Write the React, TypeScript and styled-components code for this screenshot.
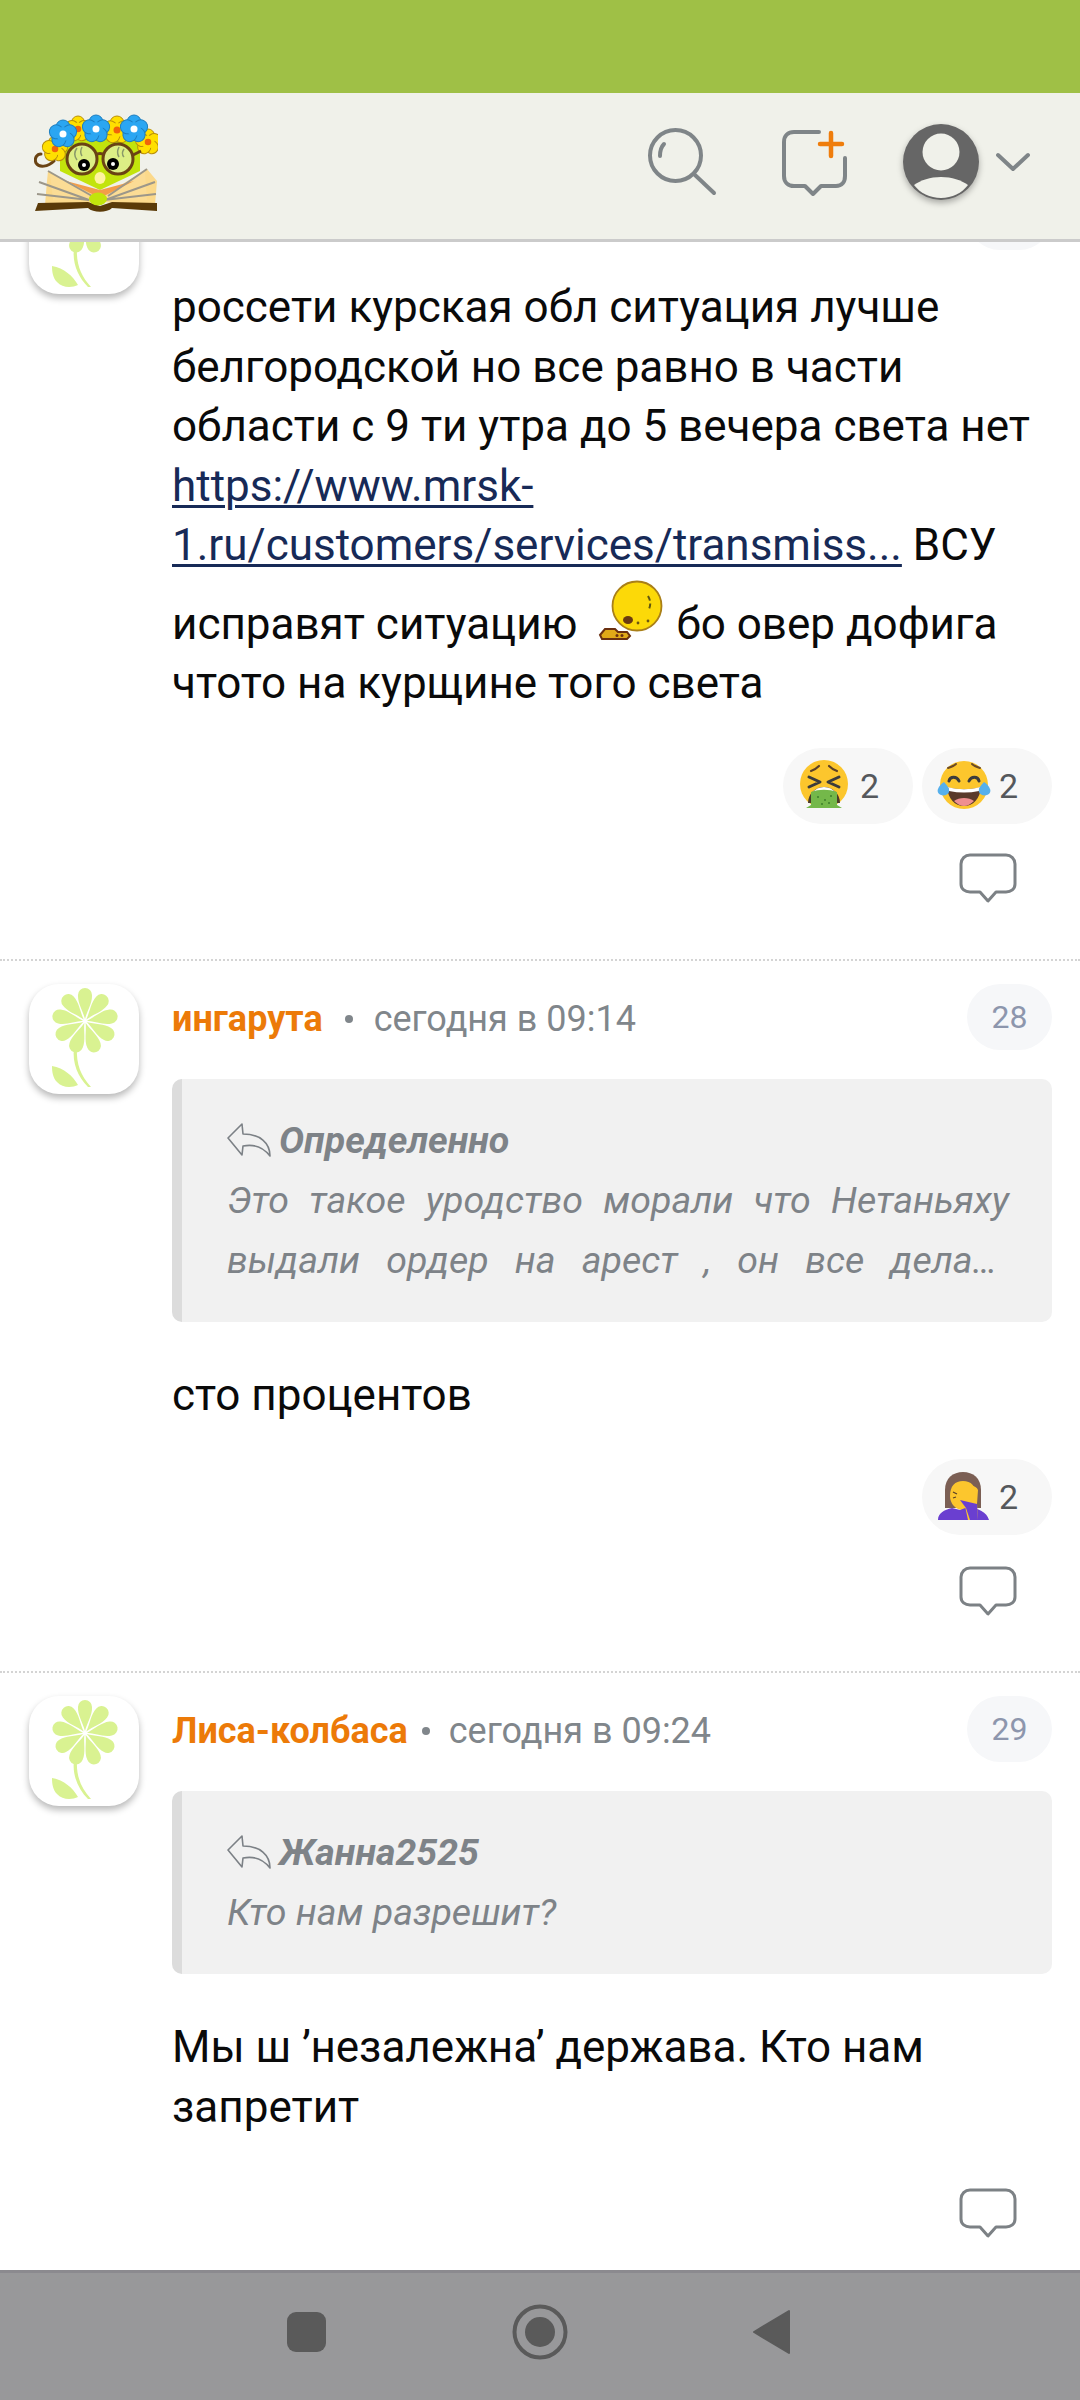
import React from "react";
import styled, { createGlobalStyle } from "styled-components";

const GlobalStyle = createGlobalStyle`
  html, body {
    margin: 0;
    padding: 0;
    background: #fff;
    font-family: Roboto, "Liberation Sans", sans-serif;
  }
  * { box-sizing: border-box; }
`;

const Screen = styled.div`
  width: 1080px;
  height: 2400px;
  display: flex;
  flex-direction: column;
  overflow: hidden;
  background: #fff;
`;

const StatusBar = styled.div`
  height: 93px;
  flex: none;
  background: #9fc046;
`;

const Header = styled.header`
  height: 149px;
  flex: none;
  display: flex;
  align-items: center;
  padding: 0 50px 6px 34px;
  background: #f0f1ea;
  border-bottom: 3px solid #cbcbcb;
  position: relative;
  z-index: 2;
`;

const HeaderIcons = styled.div`
  margin-left: auto;
  display: flex;
  align-items: center;
`;

const SearchButton = styled.div`
  display: flex;
  margin-right: 64px;
`;

const ComposeButton = styled.div`
  display: flex;
  margin-right: 52px;
`;

const UserButton = styled.div`
  display: flex;
  align-items: center;
  gap: 14px;
`;

const Feed = styled.main`
  flex: 1;
  overflow: hidden;
  min-height: 0;
`;

const FeedList = styled.div`
  margin-top: -81px;
`;

const CommentRow = styled.article<{ $last?: boolean }>`
  display: grid;
  grid-template-columns: 110px 1fr;
  column-gap: 33px;
  padding: 23px 28px 0 29px;
  border-bottom: ${(p) => (p.$last ? "none" : "2px dotted #d4d4d4")};
`;

const Avatar = styled.div`
  width: 110px;
  height: 110px;
  border-radius: 30px;
  background: #fff;
  box-shadow: 0 4px 7px rgba(0, 0, 0, 0.28);
  display: flex;
  align-items: center;
  justify-content: center;
`;

const CommentBody = styled.div`
  min-width: 0;
  display: flex;
  flex-direction: column;
`;

const MetaRow = styled.div`
  height: 66px;
  padding-top: 4px;
  display: flex;
  align-items: center;
  font-size: 36px;
  color: #80868b;
  white-space: nowrap;
`;

const Author = styled.span`
  font-weight: 700;
  color: #ec7a08;
`;

const Dot = styled.span<{ $left: number; $right: number }>`
  width: 8px;
  height: 8px;
  border-radius: 50%;
  background: #80868b;
  margin: 0 ${(p) => p.$right}px 0 ${(p) => p.$left}px;
`;

const NumberPill = styled.div`
  margin: -4px 0 0 auto;
  width: 85px;
  height: 66px;
  border-radius: 33px;
  background: #f6f7f9;
  color: #8d96ad;
  font-size: 32px;
  display: flex;
  align-items: center;
  justify-content: center;
`;

const Quote = styled.blockquote`
  margin: 29px 0 0;
  padding: 31px 43px 32px 45px;
  background: #f1f1f1;
  border-left: 10px solid #dcdcdc;
  border-radius: 10px;
  color: #7e8388;
  font-size: 37.5px;
  font-style: italic;
  line-height: 60px;
`;

const QuoteTitle = styled.div`
  display: flex;
  align-items: center;
  gap: 8px;
  font-weight: 700;
`;

const QuoteLine = styled.div<{ $justify?: boolean; $inset?: number }>`
  white-space: nowrap;
  text-align: left;
  margin-right: ${(p) => p.$inset ?? 0}px;
  ${(p) => p.$justify && "text-align-last: justify; white-space: normal;"}
`;

const Text = styled.p<{ $top?: number }>`
  margin: ${(p) => p.$top ?? 44}px 0 0;
  font-size: 44px;
  line-height: 59.5px;
  color: #0a0a0a;
`;

const PostLink = styled.a`
  color: #172a57;
  text-decoration: underline;
  text-decoration-thickness: 3px;
  text-underline-offset: 4px;
`;

const InlineEmoji = styled.span`
  display: inline-block;
  overflow: hidden;
  width: 70px;
  height: 72px;
  margin: 0 10px 0 8px;
  vertical-align: -9px;
`;

const Reactions = styled.div`
  margin-top: 34px;
  display: flex;
  justify-content: flex-end;
  gap: 9px;
`;

const ReactionPill = styled.div`
  width: 130px;
  height: 76px;
  border-radius: 38px;
  background: #f7f7f7;
  padding-left: 15px;
  display: flex;
  align-items: center;
  gap: 8px;
  color: #55585c;
  font-size: 34px;
`;

const ReplyRow = styled.div<{ $top: number; $bottom: number }>`
  margin-top: ${(p) => p.$top}px;
  padding: 0 35px ${(p) => p.$bottom}px 0;
  display: flex;
  justify-content: flex-end;
`;

const NavBar = styled.nav`
  height: 130px;
  flex: none;
  background: #98989a;
  border-top: 3px solid #8b8a8f;
  display: grid;
  grid-template-columns: repeat(3, 232px);
  justify-content: center;
  justify-items: center;
  align-items: center;
  padding-bottom: 10px;
`;

const Square = styled.div`
  width: 39px;
  height: 40px;
  margin-right: 3px;
  border-radius: 9px;
  background: #5a5a5a;
`;

const WreathFlower = ({ x, y, color, edge, core, size }: { x: number; y: number; color: string; edge: string; core: string; size: number }) => (
  <g fill={color} stroke={edge} strokeWidth="1">
    {[0, 72, 144, 216, 288].map((a) => (
      <circle key={a} cx={x} cy={y - size} r={size} transform={`rotate(${a} ${x} ${y})`} />
    ))}
    <circle cx={x} cy={y} r={size} stroke="none" />
    <circle cx={x} cy={y} r={size * 0.5} fill={core} stroke="none" />
  </g>
);

const Logo = () => (
  <svg width="124" height="98" viewBox="0 0 124 98">
    <path d="M20 47c-6 6-15 7-18 2-2-5 1-9 5-9" fill="none" stroke="#6a4314" strokeWidth="3" strokeLinecap="round" />
    <path d="M26 24h80v33L66 76 26 57z" fill="#c2e40c" />
    <path d="M14 57l52 27 47-29 10 12-2 24-55-3-55 3 2-24z" fill="#fbd98b" />
    <path d="M16 60l50 24-47 2zM111 58L66 84l47 2z" fill="#fbdc95" />
    <path d="M32 67l34 17 34-17-34 9z" fill="#f29d4a" />
    <path d="M14 57l44 25M5 68l50 18M3 80l52 6M113 55L74 82M121 68l-50 18M122 80l-52 6" stroke="#9c978a" strokeWidth="2" fill="none" />
    <path d="M1 97l3-8 50-1 12 4 12-4 45 1v8l-45-3c-5 5-19 5-24 0z" fill="#5a3a08" />
    <ellipse cx="64" cy="85" rx="9" ry="6.5" fill="#c2e40c" />
    <ellipse cx="66" cy="64" rx="5.5" ry="6" fill="#fff3a0" />
    <WreathFlower x={21} y={35} size={6.5} color="#ffdf00" edge="#b98f0a" core="#f0640a" />
    <WreathFlower x={44} y={15} size={6.5} color="#ffdf00" edge="#b98f0a" core="#f0640a" />
    <WreathFlower x={83} y={16} size={7} color="#ffdf00" edge="#b98f0a" core="#f0640a" />
    <WreathFlower x={114} y={28} size={6.5} color="#ffdf00" edge="#b98f0a" core="#f0640a" />
    <WreathFlower x={29} y={20} size={7} color="#2ba6f2" edge="#1d7ec0" core="#fff" />
    <WreathFlower x={62} y={15} size={7} color="#2ba6f2" edge="#1d7ec0" core="#fff" />
    <WreathFlower x={100} y={15} size={7} color="#2ba6f2" edge="#1d7ec0" core="#fff" />
    <circle cx="48" cy="45" r="15" fill="#dcee85" stroke="#6a4314" strokeWidth="3" />
    <circle cx="84" cy="45" r="15" fill="#dcee85" stroke="#6a4314" strokeWidth="3" />
    <path d="M62 41c2-2 6-2 8 0M99 41l8-4" fill="none" stroke="#6a4314" strokeWidth="3" />
    <path d="M43 34c-3 4-3 8 0 12M48 33c-2 4-2 6 0 9M85 33c-2 4-2 7 0 10M90 35c-2 3-2 6 0 8" fill="none" stroke="#8a9a6a" strokeWidth="1.5" />
    <circle cx="50" cy="51" r="6" fill="#000" />
    <circle cx="50" cy="51" r="2" fill="#fff" />
    <circle cx="79" cy="50" r="6" fill="#000" />
    <circle cx="79" cy="50" r="2" fill="#fff" />
  </svg>
);

const SearchIcon = () => (
  <svg width="70" height="70" viewBox="0 0 70 70" fill="none" stroke="#7f8588" strokeWidth="4" strokeLinecap="round">
    <circle cx="27.5" cy="27.5" r="25.5" />
    <path d="M47 47l19 18" />
    <path d="M12 28c0-5 1-9 4-12" />
  </svg>
);

const ComposeIcon = () => (
  <svg width="66" height="66" viewBox="0 0 66 66" fill="none" strokeLinecap="round" strokeLinejoin="round">
    <path d="M37 2H12C6 2 2 6 2 12v34c0 6 4 10 10 10h11l8 8 8-8h15c6 0 9-4 9-10V28" stroke="#7f8588" strokeWidth="4" />
    <path d="M38 14h22M49 3v23" stroke="#ef7d0c" strokeWidth="4.5" />
  </svg>
);

const UserIcon = () => (
  <svg width="82" height="82" viewBox="0 0 82 82" style={{ filter: "drop-shadow(0 3px 3px rgba(0,0,0,.3))" }}>
    <circle cx="41" cy="40" r="38" fill="#666" />
    <circle cx="41" cy="30" r="18.5" fill="#f0f1ea" />
    <path d="M14 63c7-5 16-8 27-8s20 3 27 8c-6 8-16 13-27 13S20 71 14 63z" fill="#f0f1ea" />
  </svg>
);

const Chevron = () => (
  <svg width="34" height="22" viewBox="0 0 34 22" fill="none" stroke="#7f8588" strokeWidth="4" strokeLinecap="round" strokeLinejoin="round">
    <path d="M2 3l15 14L32 3" />
  </svg>
);

const Flower = () => (
  <svg width="110" height="110" viewBox="0 0 110 110">
    <g fill="#d9f291">
      {[0, 40, 80, 120, 160, 200, 240, 280, 320].map((a) => (
        <path key={a} transform={`rotate(${a} 56 37)`} d="M56 35C54 27 48.5 19 49 11a7 7 0 0 1 14 0c.5 8-5 16-7 24z" />
      ))}
    </g>
    <path d="M23 82c12 2 21 10 26 19-6 3-16 3-21-3-4-4-5-10-5-16z" fill="#d9f291" />
    <path d="M45 64c-2 15 4 29 14 39h3C52 92 47 80 48 64z" fill="#d9f291" />
  </svg>
);

const ReplyArrow = () => (
  <svg width="44" height="34" viewBox="0 0 44 34" fill="none" stroke="#7c8186" strokeWidth="1.6" strokeLinejoin="round">
    <path d="M15 1L1 15l14 17 1-9c10-2 20 1 27 10 0-13-10-22-27-22l-1-10z" />
  </svg>
);

const ReplyBubble = () => (
  <svg width="58" height="50" viewBox="0 0 58 50" fill="none" stroke="#7c8185" strokeWidth="3" strokeLinejoin="round">
    <path d="M11 2h36c5 0 9 4 9 9v20c0 5-4 8-9 8H37l-8 9-8-9H11c-5 0-9-3-9-8V11c0-5 4-9 9-9z" />
  </svg>
);

const VomitEmoji = () => (
  <svg width="54" height="54" viewBox="0 0 54 54">
    <circle cx="26" cy="25" r="24" fill="#fcc62d" />
    <path d="M13 12c3-1 6-3 8-5M39 12c-3-1-6-3-8-5" stroke="#5a4026" strokeWidth="2.2" fill="none" strokeLinecap="round" />
    <path d="M11 18l11 5-11 5M41 18l-11 5 11 5" stroke="#3c3c3c" strokeWidth="3" fill="none" strokeLinecap="round" strokeLinejoin="round" />
    <path d="M10 44c0-9 7-16 16-16s16 7 16 16z" fill="#4a3a2a" />
    <path d="M14 34c3-4 7-6 12-6s9 2 12 6z" fill="#fff" />
    <path d="M13 33c8-3 18-3 26 0v13l5 3H8l5-3z" fill="#74b84a" />
    <g fill="#3d7f2a">
      <circle cx="20" cy="38" r="1" />
      <circle cx="27" cy="41" r="1" />
      <circle cx="33" cy="37" r="1" />
      <circle cx="24" cy="45" r="1" />
      <circle cx="31" cy="44" r="1" />
    </g>
  </svg>
);

const JoyEmoji = () => (
  <svg width="54" height="54" viewBox="0 0 54 54">
    <circle cx="27" cy="26" r="24" fill="#fcc62d" />
    <path d="M12 22c1-5 8-5 10 0M32 22c2-5 9-5 10 0" stroke="#3c3c3c" strokeWidth="3" fill="none" strokeLinecap="round" />
    <path d="M11 9c3-1 6-2 8-4M43 9c-3-1-6-2-8-4" stroke="#6b4a26" strokeWidth="2" fill="none" strokeLinecap="round" />
    <path d="M10 28c11 3 23 3 34 0-1 12-8 19-17 19S11 40 10 28z" fill="#5a3a2a" />
    <path d="M11 28c10 3 22 3 32 0l-1 4c-10 2-20 2-30 0z" fill="#fff" />
    <path d="M17 42c5-4 15-4 20 0-3 3-7 5-10 5s-7-2-10-5z" fill="#ef8f8f" />
    <path d="M7 23c3 3 6 7 5 10-1 3-5 4-8 3-3-1-4-4-3-6 1-3 3-5 6-7zM47 23c-3 3-6 7-5 10 1 3 5 4 8 3 3-1 4-4 3-6-1-3-3-5-6-7z" fill="#56b0ec" />
  </svg>
);

const FacepalmEmoji = () => (
  <svg width="54" height="54" viewBox="0 0 54 54">
    <path d="M8 38V20C8 8 16 2 26 2s18 6 18 18v18z" fill="#7b5f54" />
    <path d="M13 26c0-10 5-15 13-15 8 0 13 5 13 15 0 8-6 14-13 14s-13-6-13-14z" fill="#fcc62d" />
    <path d="M1 50c0-7 6-10 14-12l8 2 8-3c10 1 19 5 21 13z" fill="#6a3fd0" />
    <path d="M22 20l10-4c4-1 8 1 9 4l-1 14 1 16H31l-3-14-5-6-6-1 2-5z" fill="#fcc62d" />
    <path d="M23 30l6 8 4 12h8l-1-16" fill="#6a3fd0" />
    <path d="M16 22l4 2M16 28l3-1" stroke="#5a4026" strokeWidth="1.3" />
  </svg>
);

const SickEmoji = () => (
  <svg width="70" height="72" viewBox="0 0 70 72">
    <circle cx="41" cy="30" r="24.5" fill="#fcd908" stroke="#a97f18" strokeWidth="1.8" />
    <path d="M52 20c3 5 3 10 0 15" fill="none" stroke="#5f5510" strokeWidth="2" strokeDasharray="5 3" />
    <ellipse cx="32" cy="44" rx="5" ry="4" fill="#6a3a10" />
    <circle cx="42" cy="47" r="1.4" fill="#6a5510" />
    <circle cx="52" cy="45" r="1.4" fill="#6a5510" />
    <path d="M4 59l5-6h10l3 3h9l3 4-3 3H6z" fill="#e0a818" stroke="#6a2f10" strokeWidth="2" />
    <circle cx="21" cy="59.5" r="1.5" fill="#6a2f10" />
    <circle cx="26" cy="59.5" r="1.5" fill="#6a2f10" />
  </svg>
);

export default function App() {
  return (
    <Screen>
      <GlobalStyle />
      <StatusBar />
      <Header>
        <Logo />
        <HeaderIcons>
          <SearchButton><SearchIcon /></SearchButton>
          <ComposeButton><ComposeIcon /></ComposeButton>
          <UserButton>
            <UserIcon />
            <Chevron />
          </UserButton>
        </HeaderIcons>
      </Header>
      <Feed>
        <FeedList>
          <CommentRow>
            <Avatar><Flower /></Avatar>
            <CommentBody>
              <MetaRow>
                <NumberPill>27</NumberPill>
              </MetaRow>
              <Text $top={28}>
                россети курская обл ситуация лучше белгородской но все равно в части области с 9 ти утра до 5 вечера света нет{" "}
                <PostLink>https://www.mrsk-1.ru/customers/services/transmiss...</PostLink> ВСУ исправят ситуацию{" "}
                <InlineEmoji><SickEmoji /></InlineEmoji>
                бо овер дофига чтото на курщине того света
              </Text>
              <Reactions>
                <ReactionPill><VomitEmoji />2</ReactionPill>
                <ReactionPill><JoyEmoji />2</ReactionPill>
              </Reactions>
              <ReplyRow $top={29} $bottom={56}><ReplyBubble /></ReplyRow>
            </CommentBody>
          </CommentRow>

          <CommentRow>
            <Avatar><Flower /></Avatar>
            <CommentBody>
              <MetaRow>
                <Author>ингарута</Author>
                <Dot $left={22} $right={21} />
                сегодня в 09:14
                <NumberPill>28</NumberPill>
              </MetaRow>
              <Quote>
                <QuoteTitle><ReplyArrow />Определенно</QuoteTitle>
                <QuoteLine $justify>Это такое уродство морали что Нетаньяху</QuoteLine>
                <QuoteLine $justify $inset={12}>выдали ордер на арест , он все дела…</QuoteLine>
              </Quote>
              <Text>сто процентов</Text>
              <Reactions>
                <ReactionPill><FacepalmEmoji />2</ReactionPill>
              </Reactions>
              <ReplyRow $top={31} $bottom={55}><ReplyBubble /></ReplyRow>
            </CommentBody>
          </CommentRow>

          <CommentRow $last>
            <Avatar><Flower /></Avatar>
            <CommentBody>
              <MetaRow>
                <Author>Лиса-колбаса</Author>
                <Dot $left={14} $right={19} />
                сегодня в 09:24
                <NumberPill>29</NumberPill>
              </MetaRow>
              <Quote>
                <QuoteTitle><ReplyArrow />Жанна2525</QuoteTitle>
                <QuoteLine>Кто нам разрешит?</QuoteLine>
              </Quote>
              <Text>Мы ш ’незалежна’ держава. Кто нам запретит</Text>
              <ReplyRow $top={51} $bottom={30}><ReplyBubble /></ReplyRow>
            </CommentBody>
          </CommentRow>
        </FeedList>
      </Feed>
      <NavBar>
        <Square />
        <svg width="56" height="56" viewBox="0 0 56 56">
          <circle cx="28" cy="28" r="25.5" fill="none" stroke="#5a5a5a" strokeWidth="4" />
          <circle cx="28" cy="28" r="15" fill="#5a5a5a" />
        </svg>
        <svg width="40" height="46" viewBox="0 0 40 46">
          <path d="M37 2v42L2 23z" fill="#5a5a5a" stroke="#5a5a5a" strokeWidth="2" strokeLinejoin="round" />
        </svg>
      </NavBar>
    </Screen>
  );
}
